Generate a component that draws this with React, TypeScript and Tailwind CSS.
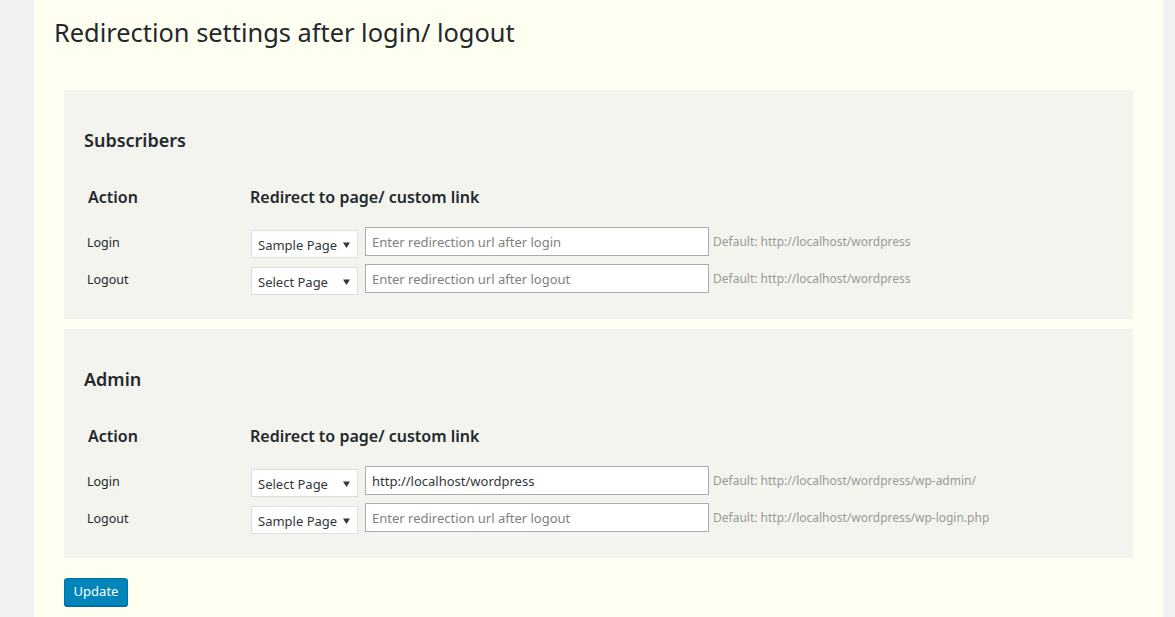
import React from 'react';

type Row = { action: string; page: string; url: string; placeholder: string; def: string };

const sections: { title: string; rows: Row[] }[] = [
  {
    title: 'Subscribers',
    rows: [
      { action: 'Login', page: 'Sample Page', url: '', placeholder: 'Enter redirection url after login', def: 'Default: http://localhost/wordpress' },
      { action: 'Logout', page: 'Select Page', url: '', placeholder: 'Enter redirection url after logout', def: 'Default: http://localhost/wordpress' },
    ],
  },
  {
    title: 'Admin',
    rows: [
      { action: 'Login', page: 'Select Page', url: 'http://localhost/wordpress', placeholder: 'Enter redirection url after login', def: 'Default: http://localhost/wordpress/wp-admin/' },
      { action: 'Logout', page: 'Sample Page', url: '', placeholder: 'Enter redirection url after logout', def: 'Default: http://localhost/wordpress/wp-login.php' },
    ],
  },
];

const PageSelect = ({ value }: { value: string }) => (
  <div className="mt-[5px] flex h-[28px] w-[107px] items-center justify-between border border-[#dedede] bg-white pl-[6px] pr-[7px] text-[13px] text-[#32373c]">
    <span className="whitespace-nowrap pt-[2px] leading-none">{value}</span>
    <svg width="7" height="6" viewBox="0 0 7 6" className="mt-[1px] shrink-0">
      <path d="M0 0.5h7L3.5 6z" fill="#32373c" />
    </svg>
  </div>
);

const Section = ({ title, rows }: { title: string; rows: Row[] }) => (
  <div className="bg-[#f4f4ee] pl-[20px] pt-[37px] pb-[22px]">
    <h2 className="h-[26px] text-[18px] leading-[26px] font-semibold text-[#23282d]">{title}</h2>
    <div className="mt-[32px] flex h-[24px] items-center text-[16px] font-semibold text-[#23282d]">
      <div className="w-[166px] pl-[4px]">Action</div>
      <div>Redirect to page/ custom link</div>
    </div>
    <div className="mt-[14px]">
      {rows.map((r) => (
        <div key={r.action} className="flex h-[37px] items-center">
          <div className="w-[167px] pl-[3px] pt-[3px] text-[12.5px] text-[#23282d]">{r.action}</div>
          <PageSelect value={r.page} />
          <input
            readOnly
            value={r.url}
            placeholder={r.placeholder}
            className="ml-[7px] h-[29px] w-[344px] border border-[#acacac] bg-white px-[6px] text-[13px] text-[#32373c] placeholder-[#808080] outline-none"
          />
          <span className="ml-[4px] pt-[1px] text-[12px] text-[#999999]">{r.def}</span>
        </div>
      ))}
    </div>
  </div>
);

export default function App() {
  return (
    <div className="min-h-screen bg-[#f1f1f1] font-['Noto_Sans',sans-serif]">
      <div className="ml-[34px] min-h-screen w-[1129px] bg-[#fefff0] pt-[16px]">
        <h1 className="pl-[20px] text-[25.4px] leading-[32px] text-[#23282d]">Redirection settings after login/ logout</h1>
        <div className="ml-[30px] mt-[42px] flex w-[1069px] flex-col gap-[10px]">
          {sections.map((s) => (
            <Section key={s.title} title={s.title} rows={s.rows} />
          ))}
        </div>
        <div className="ml-[30px] mt-[20px]">
          <button className="h-[28px] w-[64px] rounded-[3px] border border-[#0073aa] bg-[#0085ba] text-[13px] text-white shadow-[0_1px_0_#006799]">
            Update
          </button>
        </div>
      </div>
    </div>
  );
}
